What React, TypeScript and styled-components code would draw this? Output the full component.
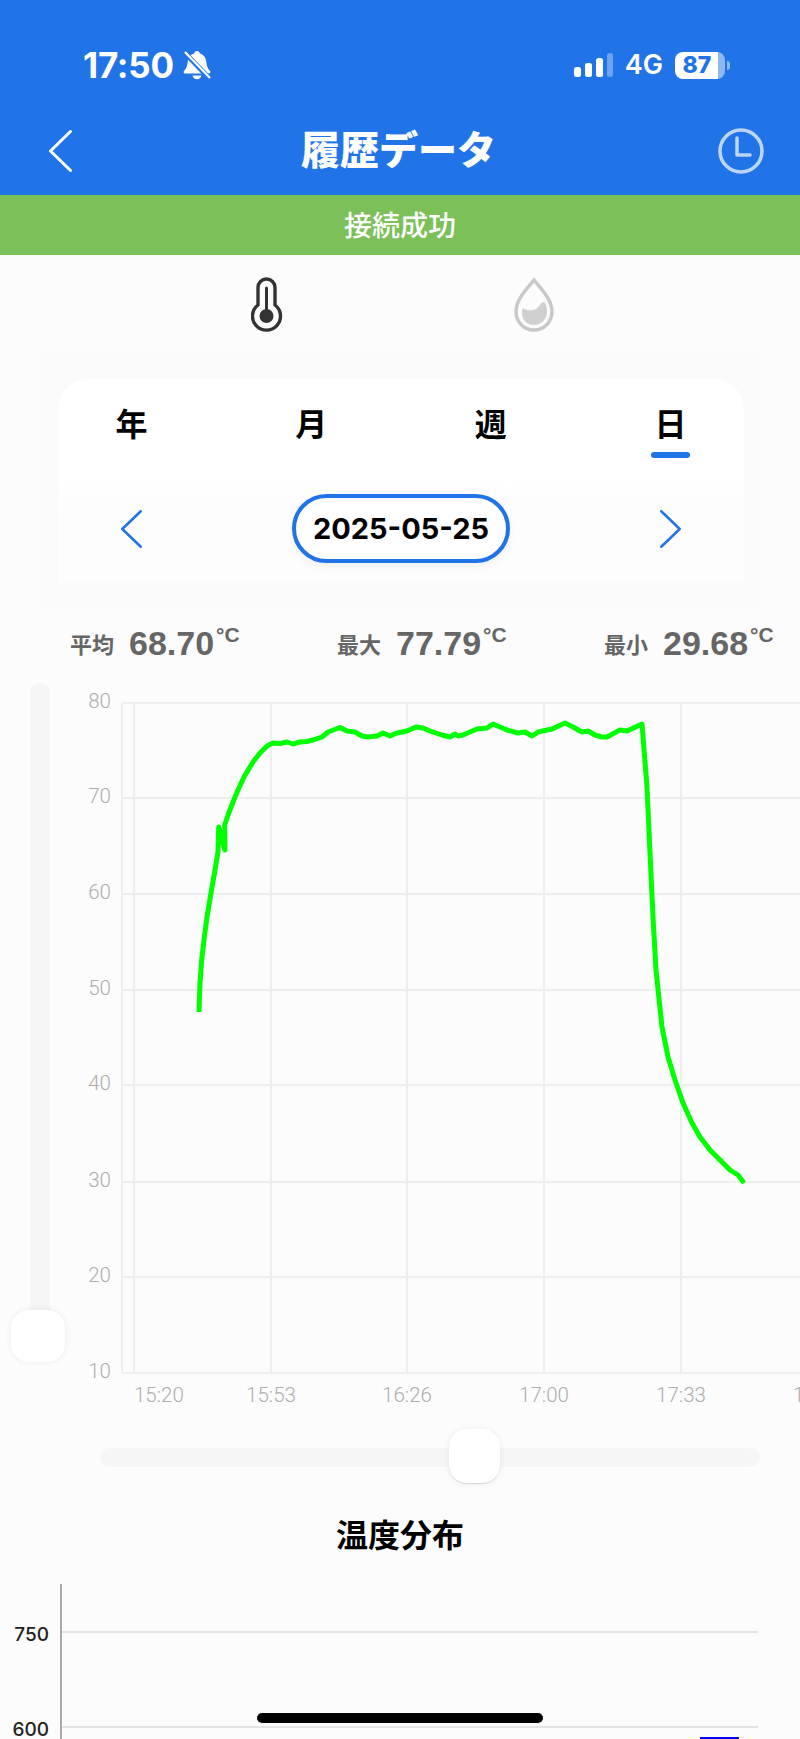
import React from "react";
import styled, { createGlobalStyle } from "styled-components";

const CJK = `"Noto Sans CJK JP", "Liberation Sans", sans-serif`;
const LATIN = `"Liberation Sans", "Noto Sans CJK JP", sans-serif`;
const BLUE = "#2074e8";

const GlobalStyle = createGlobalStyle`
  html, body {
    margin: 0;
    padding: 0;
    background: #fcfcfc;
  }
  * {
    box-sizing: border-box;
  }
`;

const Page = styled.div`
  position: relative;
  width: 800px;
  height: 1739px;
  overflow: hidden;
  background: #fcfcfc;
`;

const Header = styled.header`
  height: 195px;
  background: ${BLUE};
  color: #fff;
`;

const StatusBar = styled.div`
  display: flex;
  align-items: center;
  justify-content: space-between;
  height: 106px;
  padding: 24px 75px 0 83px;
`;

const StatusGroup = styled.div`
  display: flex;
  align-items: center;
  gap: 9px;
`;

const Time = styled.span`
  font: 700 35px/40px Inter, sans-serif;
  letter-spacing: -0.2px;
`;

const NetworkLabel = styled.span`
  font: 600 27px/30px Inter, sans-serif;
  margin: 0 3px;
`;

const Battery = styled.div`
  position: relative;
  width: 50px;
  height: 27px;
  border-radius: 8px;
  background: linear-gradient(90deg, #fff 86%, #8db8f2 86%);
  color: ${BLUE};
  font: 800 23px/27px Inter, sans-serif;
  text-align: center;
  padding-right: 6px;
`;

const BatteryNub = styled.span`
  position: absolute;
  right: -5px;
  top: 9px;
  width: 3px;
  height: 9px;
  border-radius: 0 3px 3px 0;
  background: #8db8f2;
`;

const NavBar = styled.div`
  display: grid;
  grid-template-columns: 252px auto 1fr;
  align-items: center;
  height: 89px;
  padding: 0 36px 0 49px;
`;

const NavTitle = styled.h1`
  margin: 0 0 8px;
  font: 900 39px/46px ${CJK};
`;

const NavEnd = styled.div`
  display: flex;
  justify-content: flex-end;
`;

const Banner = styled.div`
  height: 60px;
  background: #7cc05a;
  color: #fff;
  font: 500 28px/58px ${CJK};
  text-align: center;
`;

const SensorRow = styled.div`
  display: flex;
  align-items: flex-start;
  gap: 231px;
  height: 97px;
  padding: 22px 0 0 251px;
`;

const Panel = styled.section`
  height: 255px;
  margin: 0 40px;
  padding: 27px 16px 0 18px;
  background: #fafafa;
`;

const Card = styled.div`
  height: 204px;
  padding-top: 23px;
  border-radius: 30px 30px 0 0;
  background: linear-gradient(#fff 50%, #fdfdfd 62%);
`;

const Tabs = styled.div`
  display: flex;
  justify-content: space-between;
  padding: 0 54px;
`;

const Tab = styled.div`
  display: flex;
  flex-direction: column;
  align-items: center;
  width: 39px;
  color: #000;
  font: 700 32px/40px ${CJK};
`;

const TabMark = styled.span<{ $active?: boolean }>`
  width: 39px;
  height: 6px;
  margin-top: 10px;
  border-radius: 3px;
  background: ${(p) => (p.$active ? BLUE : "transparent")};
`;

const DateRow = styled.div`
  display: flex;
  align-items: center;
  justify-content: space-between;
  margin-top: 36px;
  padding: 0 63px;
`;

const DatePill = styled.div`
  width: 218px;
  height: 69px;
  border: 4px solid ${BLUE};
  border-radius: 35px;
  background: #fff;
  box-shadow: 0 4px 10px rgba(0, 0, 0, 0.05);
  color: #000;
  font: 700 29px/61px Inter, ${LATIN};
  text-align: center;
`;

const Stats = styled.div`
  display: grid;
  grid-template-columns: 267px 267px 1fr;
  height: 76px;
  padding: 16px 0 0 70px;
  color: #666;
`;

const Stat = styled.div`
  display: flex;
  align-items: center;
  height: 40px;
  white-space: nowrap;
`;

const StatLabel = styled.span`
  width: 59px;
  font: 700 22px/40px ${CJK};
`;

const StatValue = styled.span`
  font: 700 34px/40px ${LATIN};
`;

const StatUnit = styled.span`
  margin-left: 2px;
  font: 700 21px/1 ${LATIN};
  transform: translateY(-9px);
`;

const ChartRow = styled.div`
  display: flex;
  height: 730px;
  padding-left: 11px;
`;

const VSlider = styled.div`
  position: relative;
  flex: none;
  width: 54px;
`;

const VTrack = styled.div`
  width: 20px;
  height: 650px;
  margin-left: 19px;
  border-radius: 10px 10px 0 0;
  background: #f6f6f6;
`;

const Thumb = styled.div`
  position: absolute;
  background: #fff;
  border-radius: 18px;
  box-shadow: 0 0 6px rgba(0, 0, 0, 0.08);
`;

const VThumb = styled(Thumb)`
  left: 0;
  top: 627px;
  width: 54px;
  height: 52px;
`;

const HTrack = styled.div`
  position: relative;
  height: 19px;
  margin: 35px 40px 0 100px;
  border-radius: 10px;
  background: #f6f6f6;
`;

const HThumb = styled(Thumb)`
  left: 349px;
  top: -19px;
  width: 51px;
  height: 55px;
  border-bottom: 1px solid #d8d8d8;
`;

const SectionTitle = styled.h2`
  margin: 46px 0 31px;
  color: #000;
  font: 700 32px/40px ${CJK};
  text-align: center;
`;

const HomeIndicator = styled.div`
  position: absolute;
  left: 257px;
  top: 1713px;
  width: 286px;
  height: 10px;
  border-radius: 5px;
  background: #000;
`;

const Drawing = styled.svg`
  display: block;
  flex: none;
`;

const AxisText = styled.text`
  fill: #adadad;
  font: 300 20.5px Roboto, ${LATIN};
`;

const BarLabel = styled.text`
  fill: #222;
  font: 500 19px Inter, sans-serif;
`;

const LINE_POINTS = [
  [199, 1012], [200, 983], [201.7, 960], [204, 940], [207, 917], [211, 893], [215, 870], [218, 852], [218.7, 827],
  [225, 850], [224.7, 825], [228, 815], [233, 802], [238, 790], [244, 777], [253, 762], [260, 753], [267, 746],
  [273, 743], [280, 743.5], [287, 742], [293, 744], [300, 742], [307, 741.5], [313, 740], [322, 737], [328, 732],
  [340, 727.5], [347, 731], [355, 732], [362, 736], [368, 737], [377, 736], [383, 733], [390, 736], [397, 733],
  [407, 731], [416, 727], [423, 728], [430, 731], [442, 735], [450, 737], [455, 734], [458, 736], [463, 735],
  [477, 729], [487, 728], [493, 724], [500, 727], [507, 730], [518, 733], [525, 732], [532, 736], [538, 732],
  [552, 729], [565, 723], [573, 727], [582, 732], [588, 731], [595, 735], [602, 737], [607, 737], [620, 730],
  [627, 731], [642, 724], [647, 787], [650, 853], [653, 917], [656, 970], [662, 1027], [668, 1057], [675, 1080],
  [683, 1103], [692, 1123], [700, 1137], [710, 1150], [720, 1160], [730, 1170], [738, 1175], [744, 1183],
];

const Y_TICKS = [
  [80, 703], [70, 798], [60, 894], [50, 990], [40, 1085], [30, 1182], [20, 1277], [10, 1373],
];
const X_TICKS = [271, 407, 544, 681];
const X_LABELS = ["15:53", "16:26", "17:00", "17:33"];

const BellOff = () => (
  <Drawing width="28" height="30" viewBox="0 0 28 30">
    <path
      d="M14 1c1.6 0 2.6 1 2.8 2.4C21 4.6 23 8 23.400 12.500c.3 3.800 1.400 6 3.600 8.500.8 1 .3 2.500-1.200 2.500H2.200C.7 23.500.2 22 1 21c2.200-2.500 3.300-4.700 3.600-8.500C5 8 7 4.600 11.200 3.400 11.400 2 12.400 1 14 1z"
      fill="#fff"
    />
    <path d="M9.500 25.500h9c-.4 2.300-2.200 3.800-4.500 3.800s-4.100-1.500-4.500-3.800z" fill="#fff" />
    <path d="M2 3l25 26" stroke={BLUE} strokeWidth="5" />
    <path d="M2 2l25 26" stroke="#fff" strokeWidth="2.200" />
  </Drawing>
);

const SignalBars = () => (
  <Drawing width="39" height="24" viewBox="0 0 39 24">
    <rect x="0" y="14" width="7" height="10" rx="2.500" fill="#fff" />
    <rect x="11" y="10" width="7" height="14" rx="2.500" fill="#fff" />
    <rect x="22" y="5" width="7" height="19" rx="2.500" fill="#fff" />
    <rect x="33" y="0" width="6" height="24" rx="2.500" fill="#fff" fillOpacity="0.35" />
  </Drawing>
);

const Chevron = ({ dir, color, w, h, sw }: { dir: "left" | "right"; color: string; w: number; h: number; sw: number }) => (
  <Drawing width={w} height={h} viewBox={`0 0 ${w} ${h}`}>
    <path
      d={
        dir === "left"
          ? `M${w - sw / 2} ${sw / 2}L${sw / 2} ${h / 2}L${w - sw / 2} ${h - sw / 2}`
          : `M${sw / 2} ${sw / 2}L${w - sw / 2} ${h / 2}L${sw / 2} ${h - sw / 2}`
      }
      fill="none"
      stroke={color}
      strokeWidth={sw}
      strokeLinecap="round"
      strokeLinejoin="round"
    />
  </Drawing>
);

const ClockIcon = () => (
  <Drawing width="46" height="46" viewBox="0 0 46 46">
    <circle cx="23" cy="23" r="21" fill="none" stroke="#fff" strokeOpacity="0.7" strokeWidth="3.500" />
    <path d="M19 10v17h13" fill="none" stroke="#fff" strokeOpacity="0.7" strokeWidth="3.500" strokeLinecap="round" strokeLinejoin="round" />
  </Drawing>
);

const Thermometer = () => (
  <Drawing width="32" height="55" viewBox="0 0 32 55">
    <path
      d="M7 28V10.500a8.500 8.500 0 0 1 17 0V28a14 14 0 1 1-17 0z"
      fill="none"
      stroke="#333"
      strokeWidth="3.400"
    />
    <path d="M15.500 11v22" stroke="#333" strokeWidth="3" strokeLinecap="round" />
    <circle cx="15.500" cy="39" r="7" fill="#333" />
  </Drawing>
);

const Droplet = () => (
  <Drawing width="40" height="55" viewBox="0 0 40 55">
    <path
      d="M20 3C13 12 2 22 2 34.500 2 45 10 53 20 53s18-8 18-18.500C38 22 27 12 20 3z"
      fill="none"
      stroke="#c8c8c8"
      strokeWidth="3.400"
    />
    <path
      d="M9 31c4 3 9 3 13 1 3-2 5-7 8-7 2 1 3 6 3 10 0 7-6 13-13 13S8 43 8 36c0-2 0-4 1-5z"
      fill="#d0d0d0"
    />
  </Drawing>
);

const LineChart = () => (
  <Drawing width="735" height="730" viewBox="65 683 735 730">
    {Y_TICKS.map(([label, y]) => (
      <g key={label}>
        <line x1="122" x2="800" y1={y} y2={y} stroke="#eeeeee" strokeWidth="2" />
        <AxisText x="111" y={y + 5} textAnchor="end">
          {label}
        </AxisText>
      </g>
    ))}
    <line x1="122" x2="122" y1="703" y2="1373" stroke="#eeeeee" strokeWidth="2" />
    <line x1="134" x2="134" y1="703" y2="1373" stroke="#eeeeee" strokeWidth="2" />
    {X_TICKS.map((x, i) => (
      <g key={x}>
        <line x1={x} x2={x} y1="703" y2="1373" stroke="#eeeeee" strokeWidth="2" />
        <AxisText x={x} y="1402" textAnchor="middle">
          {X_LABELS[i]}
        </AxisText>
      </g>
    ))}
    <AxisText x="134" y="1402">
      15:20
    </AxisText>
    <AxisText x="793" y="1402">
      18:06
    </AxisText>
    <polyline
      points={LINE_POINTS.map((p) => p.join(",")).join(" ")}
      fill="none"
      stroke="#00ff00"
      strokeWidth="5"
      strokeLinejoin="round"
    />
  </Drawing>
);

const BarChart = () => (
  <Drawing width="800" height="155" viewBox="0 1584 800 155">
    <line x1="61" x2="61" y1="1584" y2="1739" stroke="#aaaaaa" strokeWidth="2" />
    <line x1="62" x2="758" y1="1632" y2="1632" stroke="#e4e4e4" strokeWidth="2" />
    <line x1="62" x2="758" y1="1727" y2="1727" stroke="#e4e4e4" strokeWidth="2" />
    <BarLabel x="49" y="1641" textAnchor="end">
      750
    </BarLabel>
    <BarLabel x="49" y="1736" textAnchor="end">
      600
    </BarLabel>
    <rect x="700" y="1737" width="39" height="2" fill="#0000ff" />
  </Drawing>
);

const TABS = ["年", "月", "週", "日"];

const STATS = [
  { label: "平均", value: "68.70" },
  { label: "最大", value: "77.79" },
  { label: "最小", value: "29.68" },
];

const App = () => {
  return (
    <Page>
      <GlobalStyle />
      <Header>
        <StatusBar>
          <StatusGroup>
            <Time>17:50</Time>
            <BellOff />
          </StatusGroup>
          <StatusGroup>
            <SignalBars />
            <NetworkLabel>4G</NetworkLabel>
            <Battery>
              87
              <BatteryNub />
            </Battery>
          </StatusGroup>
        </StatusBar>
        <NavBar>
          <Chevron dir="left" color="#fff" w={23} h={42} sw={3} />
          <NavTitle>履歴データ</NavTitle>
          <NavEnd>
            <ClockIcon />
          </NavEnd>
        </NavBar>
      </Header>
      <Banner>接続成功</Banner>
      <SensorRow>
        <Thermometer />
        <Droplet />
      </SensorRow>
      <Panel>
        <Card>
          <Tabs>
            {TABS.map((tab) => (
              <Tab key={tab}>
                {tab}
                <TabMark $active={tab === "日"} />
              </Tab>
            ))}
          </Tabs>
          <DateRow>
            <Chevron dir="left" color={BLUE} w={21} h={38} sw={2.5} />
            <DatePill>2025-05-25</DatePill>
            <Chevron dir="right" color={BLUE} w={21} h={38} sw={2.5} />
          </DateRow>
        </Card>
      </Panel>
      <Stats>
        {STATS.map((stat) => (
          <Stat key={stat.label}>
            <StatLabel>{stat.label}</StatLabel>
            <StatValue>{stat.value}</StatValue>
            <StatUnit>°C</StatUnit>
          </Stat>
        ))}
      </Stats>
      <ChartRow>
        <VSlider>
          <VTrack />
          <VThumb />
        </VSlider>
        <LineChart />
      </ChartRow>
      <HTrack>
        <HThumb />
      </HTrack>
      <SectionTitle>温度分布</SectionTitle>
      <BarChart />
      <HomeIndicator />
    </Page>
  );
};

export default App;
